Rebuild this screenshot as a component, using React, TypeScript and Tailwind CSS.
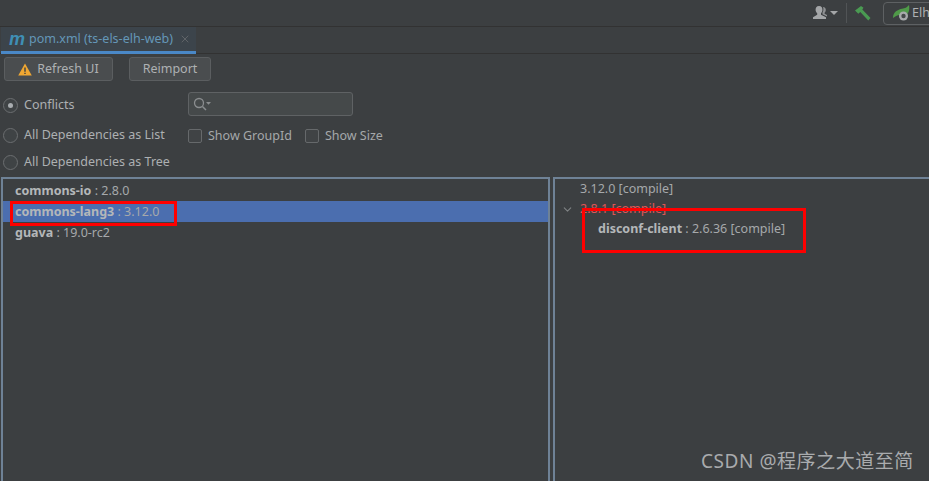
import { X, ChevronDown } from "lucide-react";

function Radio({ on, label }: { on?: boolean; label: string }) {
  return (
    <div className="flex items-center gap-[6px]">
      <span className="flex h-[15px] w-[15px] items-center justify-center rounded-full border border-[#6b6e70] bg-[#3f4345]">
        {on && <span className="h-[5px] w-[5px] rounded-full bg-[#a9adb0]" />}
      </span>
      <span className="text-[12.5px] leading-[16px] text-[#adb0b2]">{label}</span>
    </div>
  );
}

function CheckBox({ label }: { label: string }) {
  return (
    <div className="flex items-center gap-[6px]">
      <span className="h-[14px] w-[14px] rounded-[2px] border border-[#66696b] bg-[#404345]" />
      <span className="text-[12.5px] leading-[16px] text-[#a5a8aa]">{label}</span>
    </div>
  );
}

function Dep({ name, ver, sel }: { name: string; ver: string; sel?: boolean }) {
  return (
    <div className={`flex h-[21px] items-center pt-[2px] pl-[12px] text-[12.5px] ${sel ? "bg-[#4b6eaf]" : ""}`}>
      <span className="font-bold text-[#b4b7b9]">{name}</span>
      <span className="whitespace-pre text-[#a6a9ab]"> : {ver}</span>
    </div>
  );
}

export default function App() {
  return (
    <div className="relative flex h-[481px] w-[929px] flex-col overflow-hidden bg-[#3c3f41] font-['Noto_Sans','Noto_Sans_CJK_SC',sans-serif]">
      {/* nav bar */}
      <div className="flex h-[27px] shrink-0 items-center justify-end border-b border-[#323232]">
        <svg width="26" height="16" viewBox="0 0 26 16" className="mr-[7px]">
          <path d="M6 1c2.600 0 3.700 2.100 3.400 4.200-.2 1.400-.8 2.500-1.400 3.100v1.500L13 12.300V14H0v-1.700l4.200-2.500V8.300C3.500 7.500 2.800 6.500 2.600 5.200 2.300 3.100 3.600 1 6 1z" fill="#a4a6a8" />
          <path d="M10 2c1.800 0 3 1.500 2.800 3.300-.1 1.100-.7 2-1.200 2.500v1l2.400 1.200v1.500l-3-1.500-1.500-.8V7.500C10.300 6.500 10.800 4 10 2z" fill="#8f9193" />
          <path d="M17 6h8l-4 4z" fill="#a4a6a8" />
        </svg>
        <span className="mr-[8px] h-[20px] w-px bg-[#515456]" />
        <svg width="16" height="15" viewBox="0 0 16 15" className="mr-[12px]">
          <path d="M0 4.500 6 0l2.500 1.800L7.300 3.500 15.500 12l-2.200 2.500L5.300 6 3.300 7.800z" fill="#4a9a52" />
        </svg>
        <div className="-mr-[8px] flex h-[23px] w-[54px] items-center rounded-[4px] border border-[#5e6163] pl-[9px]">
          <svg width="19" height="16" viewBox="0 0 19 16" className="shrink-0">
            <path d="M0 13C0 7 5 4.500 9 3.800 12 3.300 14 2.500 16 0c1 5-.5 8-2.500 10H7c-3 0-5 1.500-7 3z" fill="#4f9a48" />
            <circle cx="10.500" cy="11" r="4.500" fill="#a8aaac" />
            <circle cx="10.500" cy="11" r="2.200" fill="#45484a" />
          </svg>
          <span className="text-[12.5px] text-[#aeb1b3]">Elh</span>
        </div>
      </div>

      {/* tab strip */}
      <div className="flex h-[27px] shrink-0 border-b border-[#323232] pl-px">
        <div className="flex h-[27px] w-[195px] items-center border-b-[3px] border-[#4a88c7] bg-[#3c444b] pl-[8px]">
          <span className="w-[20px] font-['Liberation_Sans',sans-serif] text-[18px] leading-none font-bold italic text-[#3f8fb5]">m</span>
          <span className="text-[12.5px] whitespace-nowrap text-[#6497b8]">pom.xml (ts-els-elh-web)</span>
          <X size={12} className="ml-[6px] text-[#6c6f71]" strokeWidth={1.5} />
        </div>
      </div>

      {/* toolbar */}
      <div className="flex shrink-0 gap-[16px] pt-[3px] pl-[4px]">
        <button className="flex h-[24px] w-[109px] items-center justify-center gap-[5px] rounded-[3px] border border-[#5b5e60] bg-[#4a4d4f] text-[12.5px] text-[#aeb1b3]">
          <svg width="14" height="13" viewBox="0 0 14 13">
            <path d="M7 .5 13.800 12.500H.2z" fill="#f0a732" />
            <path d="M6.300 4.500h1.400v4.300H6.300zM6.300 9.700h1.400v1.400H6.300z" fill="#3c3f41" />
          </svg>
          Refresh UI
        </button>
        <button className="h-[24px] w-[82px] rounded-[3px] border border-[#5b5e60] bg-[#4a4d4f] text-[12.5px] text-[#aeb1b3]">
          Reimport
        </button>
      </div>

      {/* options */}
      <div className="flex shrink-0 pt-[11px] pl-[3px]">
        <div className="flex w-[185px] flex-col">
          <div className="mt-[5px] h-[16px]"><Radio on label="Conflicts" /></div>
          <div className="mt-[14px] h-[16px]"><Radio label="All Dependencies as List" /></div>
          <div className="mt-[11px] h-[16px]"><Radio label="All Dependencies as Tree" /></div>
        </div>
        <div className="flex flex-col">
          <div className="flex h-[24px] w-[165px] items-center rounded-[3px] border border-[#5f6264] bg-[#45494a] pl-[4px]">
            <svg width="18" height="14" viewBox="0 0 18 14">
              <circle cx="6" cy="6" r="4.500" fill="none" stroke="#8a8d8f" strokeWidth="1.300" />
              <path d="m9.500 9.500 3.500 3.500" stroke="#8a8d8f" strokeWidth="1.500" />
              <path d="M13 5h5l-2.500 2.800z" fill="#8a8d8f" />
            </svg>
          </div>
          <div className="mt-[12px] flex gap-[13px]">
            <CheckBox label="Show GroupId" />
            <CheckBox label="Show Size" />
          </div>
        </div>
      </div>

      {/* panels */}
      <div className="mt-[7px] flex min-h-0 flex-1 gap-[3px] pl-px">
        <div className="w-[549px] border-2 border-b-0 border-[#6f8296] pt-[1px]">
          <Dep name="commons-io" ver="2.8.0" />
          <Dep name="commons-lang3" ver="3.12.0" sel />
          <Dep name="guava" ver="19.0-rc2" />
        </div>
        <div className="flex-1 border-2 border-r-0 border-b-0 border-[#6f8296] text-[12.5px] text-[#a6a9ab]">
          <div className="flex h-[20px] items-center pl-[25px]">3.12.0 [compile]</div>
          <div className="relative flex h-[20px] items-center pl-[25px] text-[#e05555]">
            <ChevronDown size={13} className="absolute left-[6px] text-[#7f8284]" />
            2.8.1 [compile]
          </div>
          <div className="flex h-[20px] items-center whitespace-pre pl-[43px]">
            <span className="font-bold text-[#b4b7b9]">disconf-client</span> : 2.6.36 [compile]
          </div>
        </div>
      </div>

      {/* red annotation boxes */}
      <div className="absolute top-[201px] left-[10px] h-[25px] w-[167px] border-[3px] border-[#fe0000]" />
      <div className="absolute top-[208px] left-[582px] h-[45px] w-[224px] border-[3px] border-[#fe0000]" />

      {/* watermark */}
      <div className="absolute top-[447px] left-[701px] text-[19px] leading-[28px] tracking-[0.55px] whitespace-nowrap text-[#a9abad]">
        CSDN @程序之大道至简
      </div>
    </div>
  );
}
